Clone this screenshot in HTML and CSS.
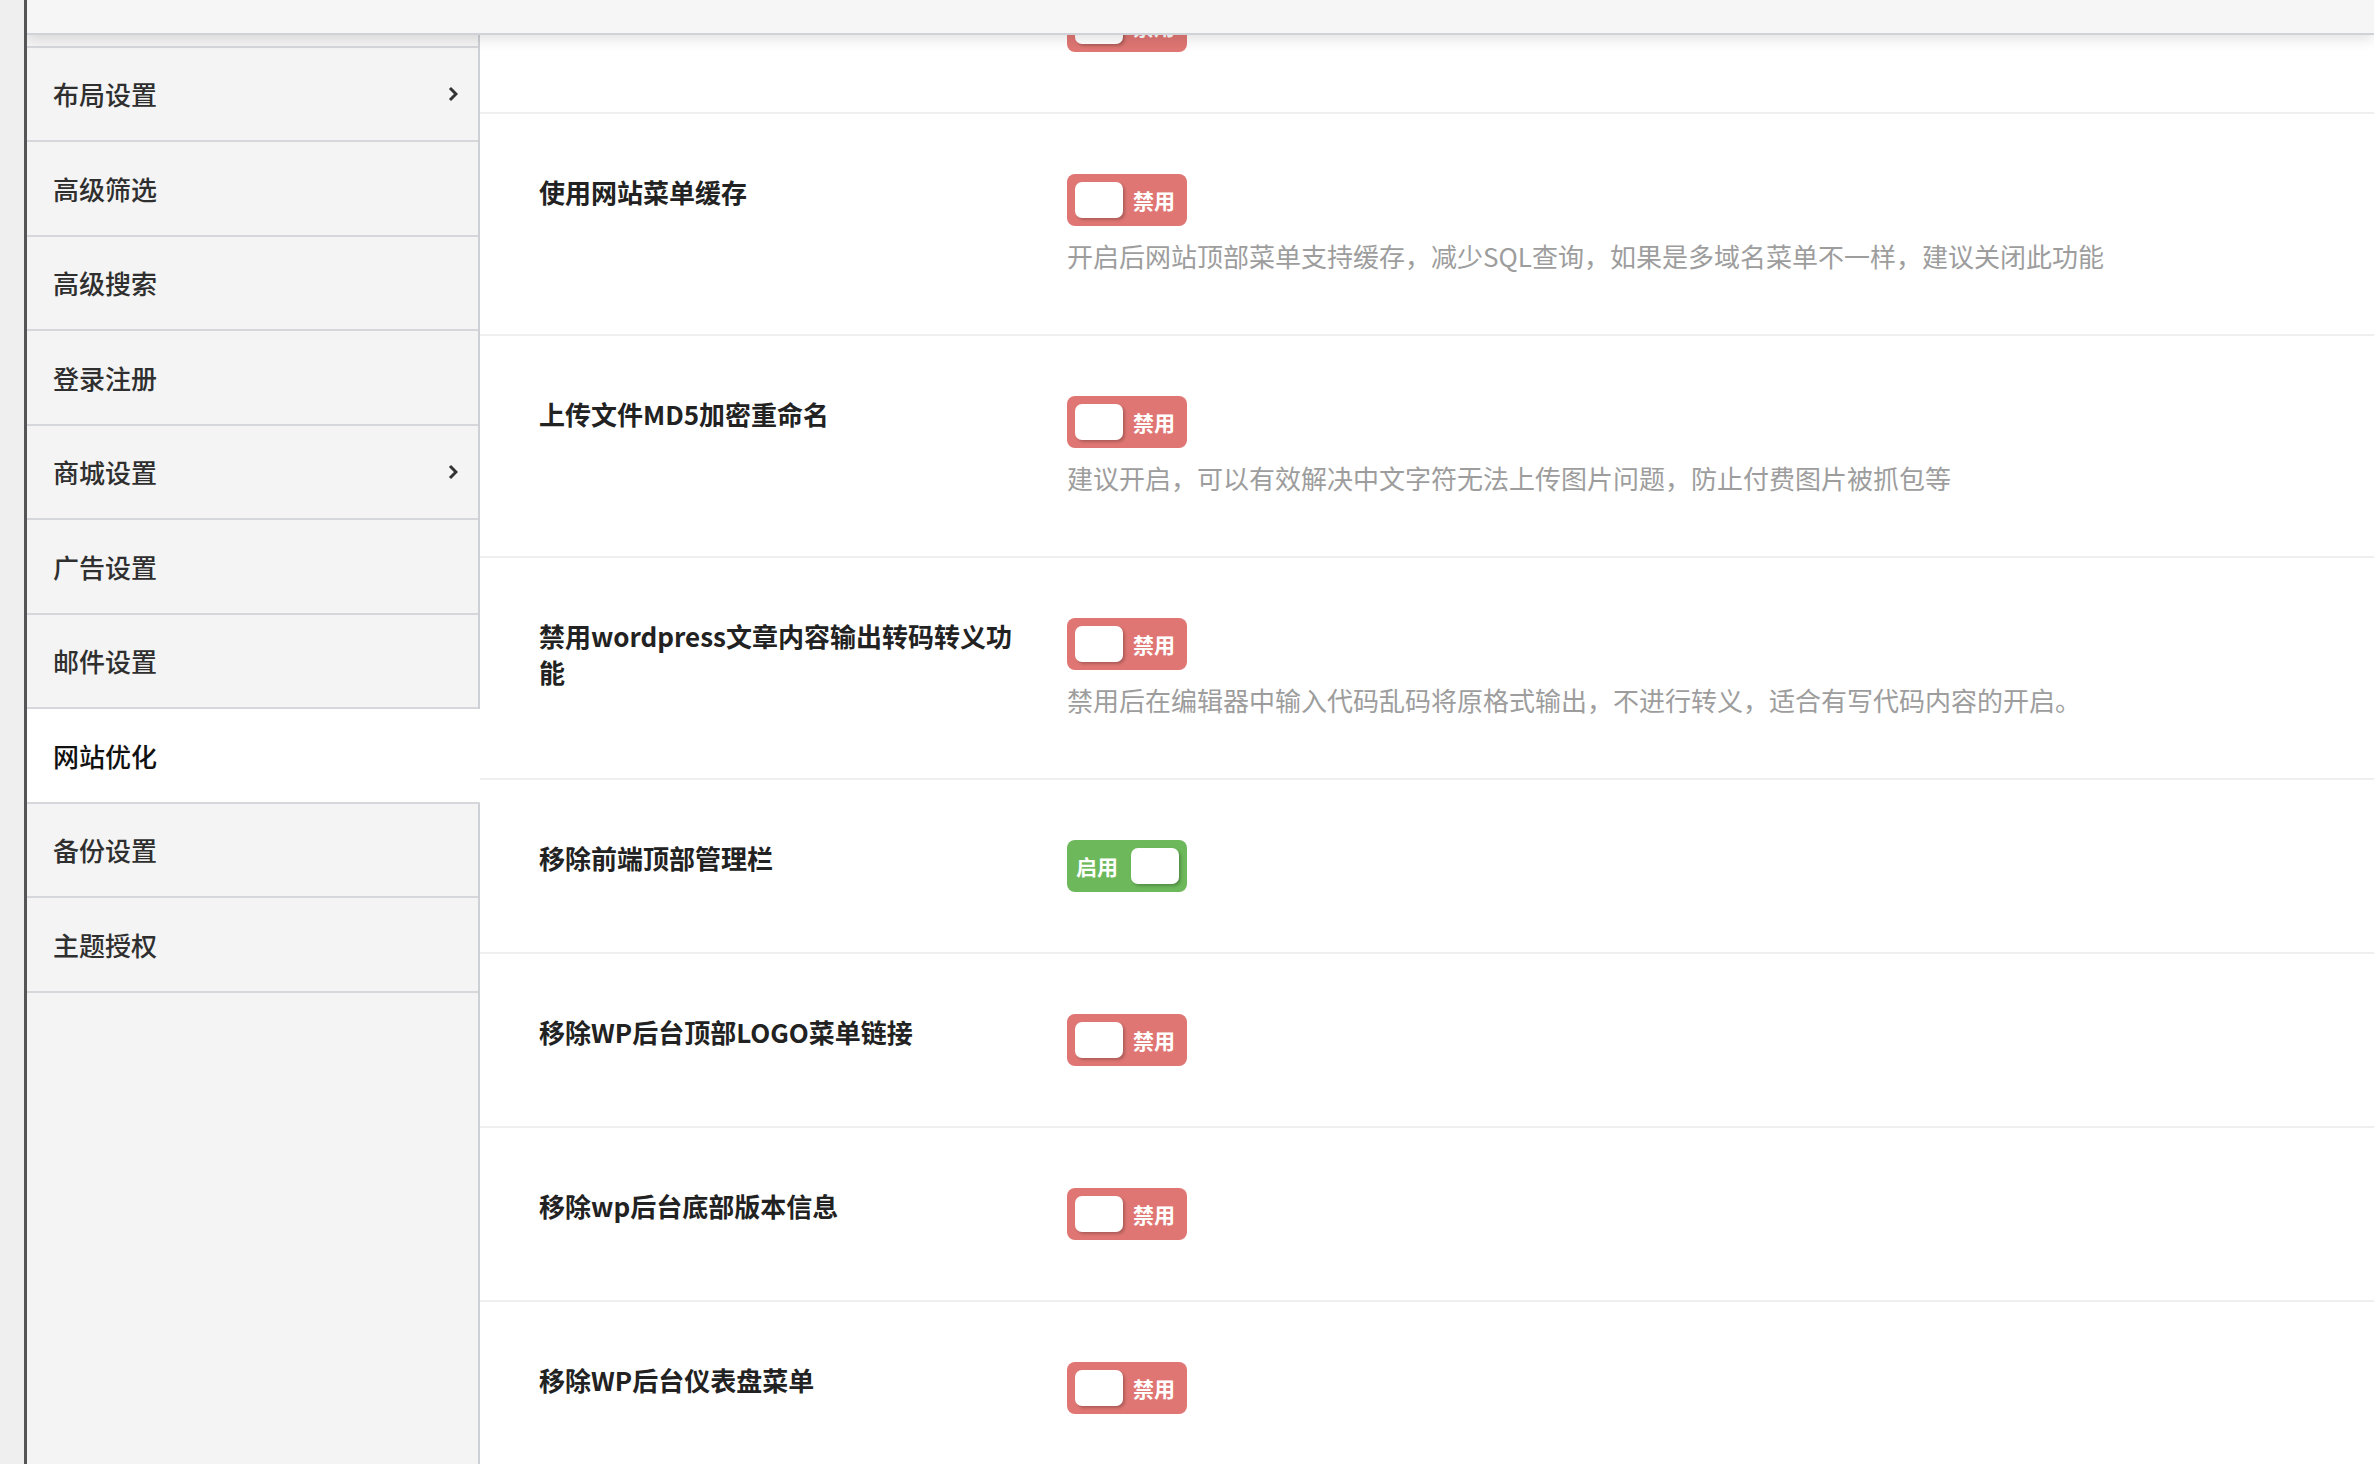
FILE: index.html
```html
<!DOCTYPE html>
<html lang="zh-CN">
<head>
  <meta charset="UTF-8" />
  <meta name="viewport" content="width=device-width, initial-scale=1" />
  <title>网站优化 - 主题设置</title>
  <link rel="stylesheet" href="styles.css">
</head>
<body>
<div class="app">
  <header class="topbar"></header>

  <div class="layout">
    <aside class="sidebar">
      <div class="nav-item nav-stub"></div>
      <a class="nav-item">布局设置
        <svg class="nav-arrow" viewBox="0 0 10 16"><polyline points="2,2 8,8 2,14" /></svg>
      </a>
      <a class="nav-item">高级筛选</a>
      <a class="nav-item">高级搜索</a>
      <a class="nav-item">登录注册</a>
      <a class="nav-item">商城设置
        <svg class="nav-arrow" viewBox="0 0 10 16"><polyline points="2,2 8,8 2,14" /></svg>
      </a>
      <a class="nav-item">广告设置</a>
      <a class="nav-item">邮件设置</a>
      <a class="nav-item active">网站优化</a>
      <a class="nav-item">备份设置</a>
      <a class="nav-item">主题授权</a>
    </aside>

    <main class="settings">
      <div class="row">
        <div class="row-label"></div>
        <div class="row-field">
          <span class="switch off"><span class="knob"></span><span class="switch-text">禁用</span></span>
        </div>
      </div>

      <div class="row">
        <div class="row-label">使用网站菜单缓存</div>
        <div class="row-field">
          <span class="switch off"><span class="knob"></span><span class="switch-text">禁用</span></span>
          <p class="row-desc">开启后网站顶部菜单支持缓存，减少SQL查询，如果是多域名菜单不一样，建议关闭此功能</p>
        </div>
      </div>

      <div class="row">
        <div class="row-label">上传文件MD5加密重命名</div>
        <div class="row-field">
          <span class="switch off"><span class="knob"></span><span class="switch-text">禁用</span></span>
          <p class="row-desc">建议开启，可以有效解决中文字符无法上传图片问题，防止付费图片被抓包等</p>
        </div>
      </div>

      <div class="row">
        <div class="row-label">禁用wordpress文章内容输出转码转义功能</div>
        <div class="row-field">
          <span class="switch off"><span class="knob"></span><span class="switch-text">禁用</span></span>
          <p class="row-desc">禁用后在编辑器中输入代码乱码将原格式输出，不进行转义，适合有写代码内容的开启。</p>
        </div>
      </div>

      <div class="row">
        <div class="row-label">移除前端顶部管理栏</div>
        <div class="row-field">
          <span class="switch on"><span class="switch-text">启用</span><span class="knob"></span></span>
        </div>
      </div>

      <div class="row">
        <div class="row-label">移除WP后台顶部LOGO菜单链接</div>
        <div class="row-field">
          <span class="switch off"><span class="knob"></span><span class="switch-text">禁用</span></span>
        </div>
      </div>

      <div class="row">
        <div class="row-label">移除wp后台底部版本信息</div>
        <div class="row-field">
          <span class="switch off"><span class="knob"></span><span class="switch-text">禁用</span></span>
        </div>
      </div>

      <div class="row">
        <div class="row-label">移除WP后台仪表盘菜单</div>
        <div class="row-field">
          <span class="switch off"><span class="knob"></span><span class="switch-text">禁用</span></span>
        </div>
      </div>
    </main>
  </div>
</div>
</body>
</html>
```

FILE: styles.css
```css
body {
  margin: 0;
  background: #efefef;
  font-family: "Noto Sans CJK SC", "Noto Sans", sans-serif;
  height: 100vh;
  overflow: hidden;
}

.app {
  position: relative;
  margin-left: 24px;
  border-left: 3px solid #555;
  height: 100vh;
  overflow: hidden;
  background: #fff;
}

/* top bar sits over the scrolled content */
.topbar {
  position: absolute;
  top: 0;
  left: 0;
  right: 0;
  height: 33px;
  background: #f6f6f6;
  border-bottom: 2px solid #cfd3d8;
  box-shadow: 0 4px 14px rgba(0, 0, 0, 0.12);
  z-index: 10;
}

.layout {
  display: flex;
  min-height: 100%;
}

.sidebar {
  width: 451px;
  flex: none;
  background: #f4f4f4;
  border-right: 2px solid #cdd0d4;
}

.nav-item {
  display: flex;
  align-items: center;
  justify-content: space-between;
  height: 92.5px;
  padding: 0 20px 0 26px;
  border-bottom: 2px solid #d5d7da;
  font-size: 26px;
  font-weight: 500;
  color: #2f2f2f;
  text-decoration: none;
}

.nav-stub {
  height: 45.5px;
}

.nav-item.active {
  position: relative;
  background: #fff;
  color: #111;
  margin-right: -2px;
}

.nav-arrow {
  width: 10px;
  height: 16px;
  fill: none;
  stroke: #333;
  stroke-width: 3;
}

.settings {
  flex: 1;
  margin-top: -60px; /* page is scrolled a bit */
  background: #fff;
}

.row {
  display: flex;
  align-items: flex-start;
  padding: 60px 0 60px 59px;
  border-bottom: 2px solid #efefef;
}

.row-label {
  width: 478px;
  flex: none;
  margin-right: 50px;
  font-size: 26px;
  font-weight: 700;
  line-height: 36px;
  color: #222;
}

.row-field {
  flex: 1;
}

.row-desc {
  margin: 12px 0 0;
  font-size: 26px;
  line-height: 36px;
  color: #9d9d9d;
}

.switch {
  display: flex;
  align-items: center;
  width: 120px;
  height: 52px;
  padding: 0 8px;
  box-sizing: border-box;
  border-radius: 8px;
}

.switch.off {
  background: #df7673;
}

.switch.on {
  background: #6cb85a;
}

.knob {
  width: 48px;
  height: 36px;
  flex: none;
  background: #fff;
  border-radius: 7px;
  box-shadow: 2px 2px 3px rgba(0, 0, 0, 0.22);
}

.switch-text {
  font-size: 21px;
  font-weight: 700;
  line-height: 1;
  color: #fff;
}

.switch.off .switch-text {
  margin-left: 10px;
}

.switch.on .switch-text {
  margin-left: 1px;
}

.switch.on .knob {
  margin-left: auto;
}
```
